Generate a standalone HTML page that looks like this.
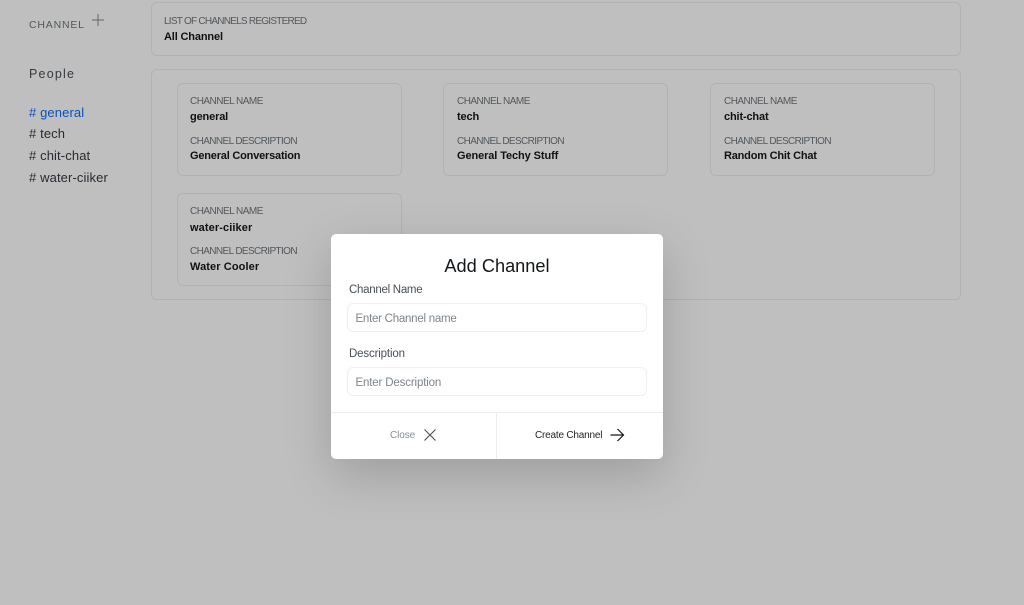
<!DOCTYPE html>
<html lang="en">
<head>
<meta charset="utf-8">
<title>Add Channel</title>
<style>
html,body{margin:0;padding:0}
body{width:1024px;height:605px;overflow:hidden;background:#fff;position:relative;font-family:"Liberation Sans",sans-serif;color:#212529}
.t{position:absolute;white-space:nowrap;line-height:16px}
.box{position:absolute;border:1px solid #eeeeee;border-radius:6px;box-sizing:border-box}
.lab{font-size:10px;color:#6f767c;letter-spacing:-.52px}
.d{letter-spacing:-.61px}
.val{font-size:11px;font-weight:bold;color:#14171a;letter-spacing:-.15px}
.nav{font-size:13px;color:#343a40;letter-spacing:.12px}
#ov{position:absolute;left:0;top:0;width:1024px;height:605px;background:rgba(0,0,0,.25)}
#m{position:absolute;left:331px;top:234px;width:332px;height:225px;background:#fff;border-radius:5px;box-shadow:0 16px 48px rgba(0,0,0,.175)}
.in{position:absolute;left:16px;width:300px;height:29px;box-sizing:border-box;border:1px solid #eef0f2;border-radius:6px}
.ph{font-size:11.5px;color:#7d858c;letter-spacing:-.25px}
.ml{font-size:11.5px;color:#495057;letter-spacing:-.28px}
</style>
</head>
<body>
<div class="t" style="left:29px;top:17px;font-size:10.5px;letter-spacing:.8px;color:#6c757d">CHANNEL</div>
<svg style="position:absolute;left:91px;top:13px" width="14" height="14" viewBox="0 0 14 14"><path d="M7 1V13M1 7H13" stroke="#858b90" stroke-width="1" fill="none"/></svg>
<div class="t" style="left:29px;top:65.5px;font-size:12.5px;letter-spacing:1.2px;color:#495057">People</div>
<div class="t nav" style="left:29px;top:105px;color:#0d6efd"># general</div>
<div class="t nav" style="left:29px;top:126px"># tech</div>
<div class="t nav" style="left:29px;top:148px"># chit-chat</div>
<div class="t nav" style="left:29px;top:170px"># water-ciiker</div>

<div class="box" style="left:151px;top:2px;width:810px;height:54px"></div>
<div class="t lab" style="left:164px;top:14px;letter-spacing:-.75px">LIST OF CHANNELS REGISTERED</div>
<div class="t val" style="left:164px;top:29px">All Channel</div>

<div class="box" style="left:151px;top:69px;width:810px;height:231px"></div>

<div class="box" style="left:177px;top:83px;width:225px;height:93px"></div>
<div class="t lab" style="left:190px;top:94px">CHANNEL NAME</div>
<div class="t val" style="left:190px;top:109px">general</div>
<div class="t lab d" style="left:190px;top:134px">CHANNEL DESCRIPTION</div>
<div class="t val" style="left:190px;top:148px;letter-spacing:-.2px">General Conversation</div>

<div class="box" style="left:443px;top:83px;width:225px;height:93px"></div>
<div class="t lab" style="left:457px;top:94px">CHANNEL NAME</div>
<div class="t val" style="left:457px;top:109px">tech</div>
<div class="t lab d" style="left:457px;top:134px">CHANNEL DESCRIPTION</div>
<div class="t val" style="left:457px;top:148px;letter-spacing:-.1px">General Techy Stuff</div>

<div class="box" style="left:710px;top:83px;width:225px;height:93px"></div>
<div class="t lab" style="left:724px;top:94px">CHANNEL NAME</div>
<div class="t val" style="left:724px;top:109px">chit-chat</div>
<div class="t lab d" style="left:724px;top:134px">CHANNEL DESCRIPTION</div>
<div class="t val" style="left:724px;top:148px;letter-spacing:-.2px">Random Chit Chat</div>

<div class="box" style="left:177px;top:193px;width:225px;height:93px"></div>
<div class="t lab" style="left:190px;top:204px">CHANNEL NAME</div>
<div class="t val" style="left:190px;top:220px;letter-spacing:.1px">water-ciiker</div>
<div class="t lab d" style="left:190px;top:244px">CHANNEL DESCRIPTION</div>
<div class="t val" style="left:190px;top:259px;letter-spacing:.1px">Water Cooler</div>

<div id="ov"></div>
<div id="m">
  <div class="t" style="left:0;width:332px;text-align:center;top:22px;line-height:20px;font-size:18.2px;color:#14171a">Add Channel</div>
  <div class="t ml" style="left:18px;top:48px">Channel Name</div>
  <div class="in" style="top:69px"></div>
  <div class="t ph" style="left:24.5px;top:77px">Enter Channel name</div>
  <div class="t ml" style="left:18px;top:112px;letter-spacing:-.15px">Description</div>
  <div class="in" style="top:133px"></div>
  <div class="t ph" style="left:24.5px;top:141px;letter-spacing:-.15px">Enter Description</div>
  <div style="position:absolute;left:0;top:178px;width:332px;height:1px;background:#eceef0"></div>
  <div style="position:absolute;left:165px;top:178px;width:1px;height:47px;background:#eceef0"></div>
  <div class="t" style="left:59px;top:194px;font-size:10px;color:#868e96;letter-spacing:-.1px">Close</div>
  <svg style="position:absolute;left:91px;top:193px" width="16" height="16" viewBox="0 0 16 16"><path d="M2.5 2.5L13.5 13.5M13.5 2.5L2.5 13.5" stroke="#495057" stroke-width="1.1" fill="none"/></svg>
  <div class="t" style="left:204px;top:194px;font-size:10px;color:#212529;letter-spacing:-.2px">Create Channel</div>
  <svg style="position:absolute;left:278px;top:193px" width="16" height="16" viewBox="0 0 16 16"><path d="M1.5 8H14M8.5 2L14.5 8L8.5 14" stroke="#14171a" stroke-width="1.2" fill="none"/></svg>
</div>
</body>
</html>
